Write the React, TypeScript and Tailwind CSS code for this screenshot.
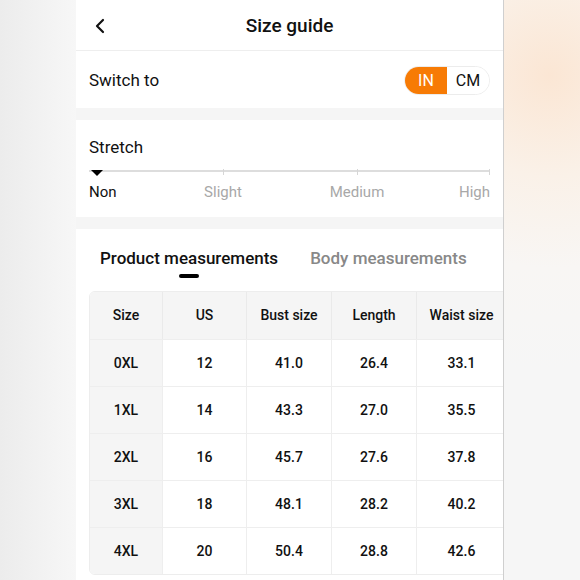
import { ChevronLeft } from 'lucide-react';

const rows = [
  ['0XL', '12', '41.0', '26.4', '33.1'],
  ['1XL', '14', '43.3', '27.0', '35.5'],
  ['2XL', '16', '45.7', '27.6', '37.8'],
  ['3XL', '18', '48.1', '28.2', '40.2'],
  ['4XL', '20', '50.4', '28.8', '42.6'],
];

const widths = ['w-[73px]', 'w-[84px]', 'w-[85px]', 'w-[85px]', 'w-[90px]'];

export default function App() {
  return (
    <div className="flex w-[580px] h-[580px] overflow-hidden font-['Roboto',sans-serif] text-[#111]">
      {/* left blurred edge */}
      <div className="w-[76px] h-full bg-gradient-to-r from-[#ececec] to-[#f7f7f7]" />

      {/* phone */}
      <div className="w-[428px] h-full bg-[#f5f5f5] border-r border-[#cfcfcf] overflow-hidden flex flex-col gap-3">
        <div className="bg-white">
          <div className="relative h-[51px] flex items-center justify-center border-b border-[#eeeeee] pt-[2px]">
            <ChevronLeft className="absolute left-[12px] w-6 h-6" strokeWidth={2.2} />
            <span className="text-[19px] font-medium">Size guide</span>
          </div>
          <div className="h-[57px] flex items-center justify-between pl-[13px] pr-[13px] pt-[2px]">
            <span className="text-[17px]">Switch to</span>
            <div className="flex h-[29px] rounded-full border border-[#ececec] overflow-hidden text-[16px]">
              <div className="w-[42px] flex items-center justify-center bg-[#f77b05] text-white">IN</div>
              <div className="w-[42px] flex items-center justify-center bg-white">CM</div>
            </div>
          </div>
        </div>

        <div className="bg-white h-[97px] px-[13px] pt-[17px]">
          <div className="text-[17px] leading-5">Stretch</div>
          <div className="relative mt-[13px] h-[2px] bg-[#dddddd]">
            <div className="absolute left-[134px] -top-[1px] w-px h-[6px] bg-[#d6d6d6]" />
            <div className="absolute left-[268px] -top-[1px] w-px h-[6px] bg-[#d6d6d6]" />
            <div className="absolute right-0 -top-[1px] w-px h-[6px] bg-[#d6d6d6]" />
            <div className="absolute left-[2px] top-[0px] w-0 h-0 border-l-[6px] border-r-[6px] border-t-[6px] border-l-transparent border-r-transparent border-t-black" />
          </div>
          <div className="relative mt-[9px] h-[18px] text-[15px] text-[#a8a8a8]">
            <span className="absolute left-0 text-[#111]">Non</span>
            <span className="absolute left-[134px] -translate-x-1/2">Slight</span>
            <span className="absolute left-[268px] -translate-x-1/2">Medium</span>
            <span className="absolute right-0">High</span>
          </div>
        </div>

        <div className="bg-white flex-1 pl-[13px]">
          <div className="flex items-start gap-[32px] pl-[11px] pt-[17px] h-[62px] text-[17px] font-medium">
            <div className="flex flex-col items-center">
              <span>Product measurements</span>
              <span className="mt-[2px] w-[20px] h-[4px] rounded-full bg-black" />
            </div>
            <span className="text-[#888888]">Body measurements</span>
          </div>
          <div className="w-[500px] rounded-md border border-[#ededed] overflow-hidden text-[14px] font-medium text-[#111]">
            <div className="flex h-[47px] bg-[#f5f5f5]">
              {['Size', 'US', 'Bust size', 'Length', 'Waist size'].map((h, i) => (
                <div key={h} className={`${widths[i]} flex items-center justify-center border-r border-[#eaeaea]`}>
                  {h}
                </div>
              ))}
            </div>
            {rows.map((r) => (
              <div key={r[0]} className="flex h-[47px] border-t border-[#eeeeee]">
                {r.map((c, i) => (
                  <div
                    key={i}
                    className={`${widths[i]} flex items-center justify-center border-r border-[#eeeeee] ${i === 0 ? 'bg-[#f5f5f5]' : 'bg-white'}`}
                  >
                    {c}
                  </div>
                ))}
              </div>
            ))}
          </div>
        </div>
      </div>

      {/* right blurred edge */}
      <div className="w-[76px] h-full bg-[#f6f6f6] bg-[radial-gradient(circle_at_60%_13%,#fbe6d4_0%,#faf1e8_20%,#f8f6f4_38%,#f6f6f6_58%)]" />
    </div>
  );
}
